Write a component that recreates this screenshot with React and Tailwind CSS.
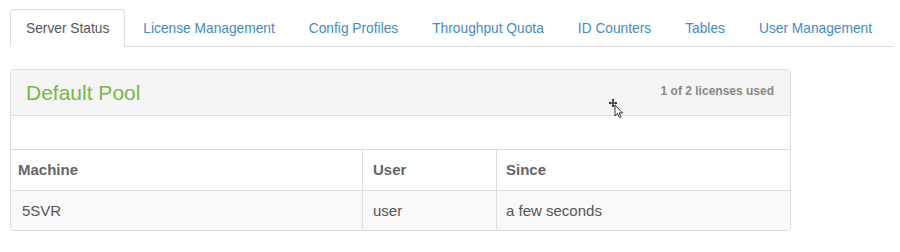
import React from "react";

const tabs = [
    "Server Status",
    "License Management",
    "Config Profiles",
    "Throughput Quota",
    "ID Counters",
    "Tables",
    "User Management",
];

const rows = [{ machine: "5SVR", user: "user", since: "a few seconds" }];

const Cursor = () => (
    <svg width="14" height="20" viewBox="0 0 14 20" className="absolute left-[609px] top-[99px]">
        <path d="M4 0v8M0 4h8" stroke="#000" strokeWidth="1" />
        <path d="M4 0l-1.5 1.5h3zM4 8l-1.5-1.5h3zM0 4l1.5-1.5v3zM8 4l-1.5-1.5v3z" fill="#000" />
        <path d="M6 6v11l2.5-2.5 2 4 1.5-.8-2-3.8h3.5z" fill="#fff" stroke="#000" strokeWidth="0.8" />
    </svg>
);

const App = () => {
    return (
        <div className="relative min-h-screen bg-white pl-[10px] pr-[7px] pt-[9px] font-['Liberation_Sans',Arial,sans-serif] text-[14px] text-[#555]">
            <ul className="flex whitespace-nowrap border-b border-[#ddd] text-[13.75px]">
                {tabs.map((tab, i) => (
                    <li key={tab} className="-mb-px mr-[2px]">
                        <a
                            className={
                                i === 0
                                    ? "block rounded-t border border-[#ddd] border-b-transparent bg-white px-[15px] pb-[7px] pt-[9px] leading-5 text-[#555]"
                                    : "block rounded-t border border-transparent px-[15px] pb-[7px] pt-[9px] leading-5 text-[#428bca]"
                            }
                        >
                            {tab}
                        </a>
                    </li>
                ))}
            </ul>

            <div className="mt-[22px] w-[781px] overflow-hidden rounded border border-[#ddd] bg-white">
                <div className="flex h-[46px] items-center justify-between border-b border-[#ddd] bg-[#f5f5f5] pl-[15px] pr-[16px]">
                    <h3 className="text-[21px] leading-none text-[#78b843]">Default Pool</h3>
                    <span className="-mt-[3px] text-[12px] font-bold text-[#888]">1 of 2 licenses used</span>
                </div>
                <div className="h-[33px]"></div>
                <div className="border-t border-[#ddd] text-[15px]">
                    <div className="flex h-[40px] items-center font-bold text-[#666]">
                        <div className="w-[352px] border-r border-[#ddd] pl-[7px] leading-[40px]">Machine</div>
                        <div className="w-[134px] border-r border-[#ddd] pl-[10px] leading-[40px]">User</div>
                        <div className="flex-1 pl-[9px] leading-[40px]">Since</div>
                    </div>
                    {rows.map((row) => (
                        <div key={row.machine} className="flex h-[40px] items-center border-t border-[#ddd] bg-[#f9f9f9] text-[#555]">
                            <div className="w-[352px] border-r border-[#ddd] pl-[11px] leading-[39px]">{row.machine}</div>
                            <div className="w-[134px] border-r border-[#ddd] pl-[10px] leading-[39px]">{row.user}</div>
                            <div className="flex-1 pl-[9px] leading-[39px]">{row.since}</div>
                        </div>
                    ))}
                </div>
            </div>
            <Cursor />
        </div>
    );
};

export default App;
